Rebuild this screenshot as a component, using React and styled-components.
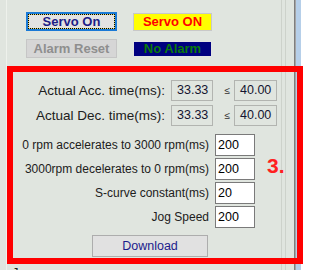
import React from "react";
import styled, { createGlobalStyle } from "styled-components";

const GlobalStyle = createGlobalStyle`
  body {
    margin: 0;
    background: #ffffff;
  }
`;

const Screen = styled.div`
  width: 311px;
  height: 270px;
  overflow: hidden;
  box-sizing: border-box;
  padding-top: 12px;
  font-family: "Liberation Sans", Arial, sans-serif;
  background: linear-gradient(
      to right,
      transparent 6px,
      #eef1ec 6px,
      #eef1ec 7px,
      transparent 7px,
      transparent 281px,
      #cdd2cb 281px,
      #cdd2cb 282px,
      transparent 282px,
      transparent 285px,
      #cdd2cb 285px,
      #cdd2cb 286px,
      transparent 286px,
      transparent 294px,
      #7e7e7e 294px,
      #7e7e7e 295px,
      #a4a4a4 295px,
      #a4a4a4 296px,
      #b6cfe9 296px,
      #b6cfe9 301px,
      #ffffff 301px
    ),
    #e0e5df;
`;

const StatusGrid = styled.div`
  display: grid;
  grid-template-columns: 91px 79px;
  grid-auto-rows: 19px;
  column-gap: 16px;
  row-gap: 8px;
  align-items: center;
  margin-left: 26px;
`;

const ActionButton = styled.button`
  box-sizing: border-box;
  width: 91px;
  height: 19px;
  padding: 0;
  margin: 0;
  font-family: "Liberation Sans", Arial, sans-serif;
  font-weight: bold;
  font-size: 13px;
  line-height: 15px;
  color: ${(p) => (p.disabled ? "#8e8e8e" : "#1c1c86")};
  background: ${(p) => (p.disabled ? "#d6d6d6" : "#e3e3e3")};
  border: ${(p) => (p.$focused ? "2px solid #1a7ad6" : "1px solid #c6c6c6")};
  outline: ${(p) => (p.$focused ? "1px dotted #000" : "none")};
  outline-offset: -3px;
  box-shadow: ${(p) => (p.$focused ? "inset 0 0 0 1px #e8d870" : "none")};
`;

const StatusLamp = styled.div`
  box-sizing: border-box;
  width: 79px;
  height: ${(p) => p.$h}px;
  border: 1px solid ${(p) => p.$edge};
  background: ${(p) => p.$bg};
  color: ${(p) => p.$fg};
  font-weight: bold;
  font-size: 13px;
  line-height: ${(p) => p.$h - 2}px;
  text-align: center;
`;

const Frame = styled.section`
  box-sizing: border-box;
  width: 296px;
  height: 198px;
  margin: 8px 0 0 7px;
  border: 6px solid #ff0000;
  padding-top: 8px;
  display: flex;
  flex-direction: column;
`;

const ReadoutRow = styled.div`
  display: flex;
  align-items: center;
  height: 21px;
  margin-bottom: ${(p) => p.$gap}px;
`;

const Label = styled.span`
  width: ${(p) => p.$w}px;
  margin-right: 6px;
  text-align: right;
  font-size: ${(p) => p.$size}px;
  color: #202020;
  white-space: nowrap;
`;

const Readout = styled.div`
  box-sizing: border-box;
  width: ${(p) => p.$w}px;
  height: 21px;
  border: 1px solid #b2b4b0;
  padding-left: 5px;
  font-size: 12.5px;
  line-height: 19px;
  color: #141430;
`;

const LessEq = styled.span`
  width: 21px;
  box-sizing: border-box;
  padding-right: 4px;
  text-align: right;
  font-size: 10px;
  color: #303030;
`;

const ParamList = styled.div`
  display: flex;
  flex-direction: column;
  gap: 2px;
  margin-top: 8px;
`;

const ParamRow = styled.div`
  display: flex;
  align-items: center;
  height: 22px;
`;

const NumberInput = styled.input`
  box-sizing: border-box;
  width: 40px;
  height: 22px;
  margin: 0;
  padding: 0 0 0 2px;
  border: 1px solid #7a7a7a;
  background: #ffffff;
  font-family: "Liberation Sans", Arial, sans-serif;
  font-size: 12.5px;
  color: #000000;
  outline: none;
`;

const StepMark = styled.span`
  align-self: flex-start;
  margin-left: 12px;
  font-weight: bold;
  font-size: 21px;
  line-height: 16px;
  color: #ff2020;
`;

const DownloadButton = styled.button`
  box-sizing: border-box;
  width: 116px;
  height: 22px;
  margin: 7px 0 0 79px;
  padding: 0;
  border: 1px solid #adadad;
  background: #e1e1e1;
  font-family: "Liberation Sans", Arial, sans-serif;
  font-size: 12.5px;
  color: #1c1c8c;
`;

const Footer = styled.div`
  margin: 1px 0 0 12px;
  font-size: 13px;
  line-height: 15px;
  color: #202020;
`;

const params = [
  { label: "0 rpm accelerates to 3000 rpm(ms)", value: "200" },
  { label: "3000rpm decelerates to 0 rpm(ms)", value: "200", mark: "3." },
  { label: "S-curve constant(ms)", value: "20" },
  { label: "Jog Speed", value: "200" },
];

export default function App() {
  return (
    <>
      <GlobalStyle />
      <Screen>
        <StatusGrid>
          <ActionButton $focused>Servo On</ActionButton>
          <StatusLamp $h={18} $bg="#ffff00" $fg="#ff0000" $edge="#c8c8c8">
            Servo ON
          </StatusLamp>
          <ActionButton disabled>Alarm Reset</ActionButton>
          <StatusLamp $h={16} $bg="#000080" $fg="#0a7a0a" $edge="#e4e4e4">
            No Alarm
          </StatusLamp>
        </StatusGrid>

        <Frame>
          <ReadoutRow $gap={4}>
            <Label $w={152} $size={13.5}>Actual Acc. time(ms):</Label>
            <Readout $w={42}>33.33</Readout>
            <LessEq>≤</LessEq>
            <Readout $w={43}>40.00</Readout>
          </ReadoutRow>
          <ReadoutRow $gap={0}>
            <Label $w={152} $size={13.5}>Actual Dec. time(ms):</Label>
            <Readout $w={42}>33.33</Readout>
            <LessEq>≤</LessEq>
            <Readout $w={43}>40.00</Readout>
          </ReadoutRow>

          <ParamList>
            {params.map((p) => (
              <ParamRow key={p.label}>
                <Label $w={196} $size={12}>{p.label}</Label>
                <NumberInput readOnly value={p.value} />
                {p.mark && <StepMark>{p.mark}</StepMark>}
              </ParamRow>
            ))}
          </ParamList>

          <DownloadButton>Download</DownloadButton>
        </Frame>

        <Footer>Jog :</Footer>
      </Screen>
    </>
  );
}
